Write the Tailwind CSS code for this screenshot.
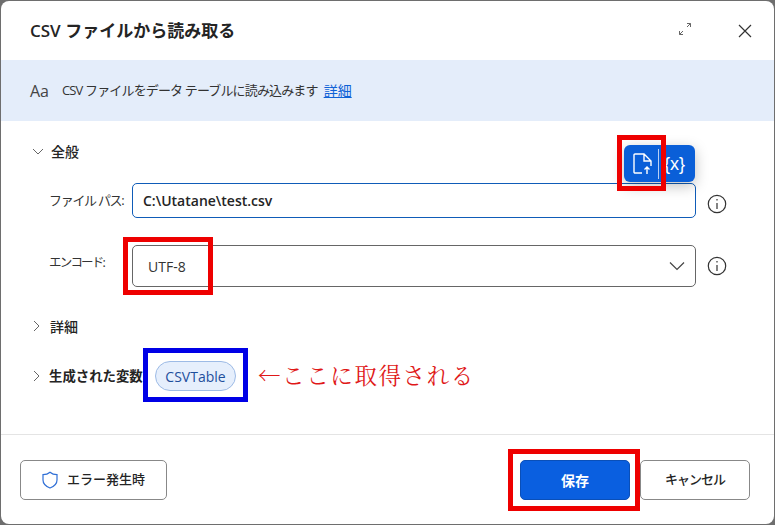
<!DOCTYPE html>
<html lang="ja">
<head>
  <meta charset="UTF-8" />
  <title>CSV ファイルから読み取る</title>
  <script src="https://cdn.jsdelivr.net/npm/@tailwindcss/browser@4"></script>
</head>
<body class="w-[775px] h-[525px] overflow-hidden bg-[#6e6e6e] text-[#242424] font-['Open_Sans','Noto_Sans_CJK_JP',sans-serif]">

  <!-- Dialog -->
  <div class="relative ml-[1px] mt-[1px] w-[773px] h-[523px] bg-white rounded-[8px] flex flex-col">

    <!-- Title -->
    <header class="h-[59px] flex items-center pl-[29px] pr-[21px]">
      <h1 class="text-[17px] font-semibold leading-none whitespace-nowrap">CSV ファイルから読み取る</h1>
      <svg class="ml-auto -mt-[3px]" width="14" height="14" viewBox="0 0 14 14" fill="none" stroke="#666" stroke-width="1">
        <path d="M1.5 12.5 L5 9 M1.5 9 V12.5 H5 M12.5 1.5 L9 5 M9 1.5 H12.5 V5" />
      </svg>
      <svg class="ml-[45px]" width="16" height="16" viewBox="0 0 16 16" fill="none" stroke="#333" stroke-width="1.2">
        <path d="M2 2 L14 14 M14 2 L2 14" />
      </svg>
    </header>

    <!-- Description -->
    <div class="h-[61px] bg-[#e4edfa] flex items-center pl-[29px] text-[13px]">
      <span class="w-[32px] text-[16px] text-[#444]">Aa</span>
      <span class="text-[#333] tracking-[-0.85px] whitespace-nowrap">CSV ファイルをデータ テーブルに読み込みます</span>
      <a href="#" class="ml-[6px] text-[14px] text-[#0f62d6] underline">詳細</a>
    </div>

    <!-- Form -->
    <div class="flex-1 pl-[31px] pr-[47px] pt-[19px]">
      <div class="h-[22px] flex items-center gap-[7px] text-[14px] font-medium">
        <svg width="12" height="12" viewBox="0 0 12 12" fill="none" stroke="#666"><path d="M1 4 L6 9 L11 4" /></svg>
        <span>全般</span>
      </div>

      <div class="mt-[21px] h-[35px] flex items-center">
        <label class="w-[100px] pl-[17px] text-[13px] tracking-[-1.3px] text-[#333] shrink-0 whitespace-nowrap">ファイル パス:</label>
        <div class="w-[564px] h-[35px] border border-[#0f5cb8] rounded-[5px] flex items-center pl-[10px] text-[14px] font-semibold">C:\Utatane\test.csv</div>
        <svg class="ml-[11px] mt-[6px]" width="20" height="20" viewBox="0 0 20 20" fill="none" stroke="#333" stroke-width="1.2">
          <circle cx="10" cy="10" r="8.7" /><path d="M10 9 V15 M10 5 V6.6" />
        </svg>
      </div>

      <div class="mt-[27px] h-[42px] flex items-center">
        <label class="w-[100px] pl-[17px] text-[12.5px] tracking-[-1.8px] text-[#333] shrink-0 -mt-[6px] whitespace-nowrap">エンコード:</label>
        <div class="w-[564px] h-[42px] border border-[#666] rounded-[5px] flex items-center pl-[15px] pr-[10px] text-[14px] text-[#333]">
          UTF-8
          <svg class="ml-auto" width="16" height="16" viewBox="0 0 16 16" fill="none" stroke="#444" stroke-width="1.2"><path d="M1 4.5 L8 11.5 L15 4.5" /></svg>
        </div>
        <svg class="ml-[11px]" width="20" height="20" viewBox="0 0 20 20" fill="none" stroke="#333" stroke-width="1.2">
          <circle cx="10" cy="10" r="8.7" /><path d="M10 9 V15 M10 5 V6.6" />
        </svg>
      </div>

      <div class="mt-[28px] h-[22px] flex items-center gap-[8px] text-[14px] font-medium">
        <svg width="10" height="12" viewBox="0 0 10 12" fill="none" stroke="#666"><path d="M2 1 L7 6 L2 11" /></svg>
        <span>詳細</span>
      </div>

      <div class="mt-[24px] h-[30px] flex items-center text-[13.4px] font-semibold">
        <svg class="mr-[7px]" width="10" height="12" viewBox="0 0 10 12" fill="none" stroke="#666"><path d="M2 1 L7 6 L2 11" /></svg>
        <span class="w-[106px] whitespace-nowrap">生成された変数</span>
        <span class="w-[81px] h-[30px] rounded-full border border-[#9dbbe6] bg-[#e6effc] text-[#1f4f9c] text-[14px] font-normal flex items-center justify-center">CSVTable</span>
        <span class="ml-[22px] -mt-[3px] text-[#e01818] text-[22.5px] font-normal font-['Noto_Serif_CJK_JP','Noto_Sans_CJK_JP',serif] tracking-[1.6px] whitespace-nowrap">←ここに取得される</span>
      </div>
    </div>

    <!-- Footer -->
    <footer class="h-[90px] border-t border-[#e4e4e4] flex items-center pl-[19px] pr-[24px] pt-[1px] text-[14px]">
      <button class="w-[147px] h-[40px] border border-[#888] rounded-[5px] flex items-center justify-center gap-[9px] text-[13px] font-medium">
        <svg width="16" height="18" viewBox="0 0 16 18" fill="none" stroke="#2f6fd6" stroke-width="1.2"><path d="M8 1.2 C10 3 12.5 3.6 15 3.6 V9 C15 13 12 15.5 8 17 C4 15.5 1 13 1 9 V3.6 C3.5 3.6 6 3 8 1.2 Z" /></svg>
        エラー発生時
      </button>
      <button class="ml-auto w-[110px] h-[40px] rounded-[5px] bg-[#0a5fe0] border border-[#0a4fb8] text-white font-bold">保存</button>
      <button class="ml-[10px] w-[110px] h-[40px] border border-[#888] rounded-[5px] text-[13px] tracking-[-1px] font-medium">キャンセル</button>
    </footer>

    <!-- File / variable popup over the input -->
    <div class="absolute left-[623px] top-[144px] w-[71px] h-[37px] rounded-[6px] bg-[#0a5fd8] shadow-[0_4px_14px_rgba(0,0,0,0.25)] flex items-center text-white">
      <svg class="ml-[8px]" width="21" height="22" viewBox="0 0 21 22" fill="none" stroke="white" stroke-width="1.4">
        <path d="M10 20 H3 A1 1 0 0 1 2 19 V2 A1 1 0 0 1 3 1 H12 L19 8 V13 M12 1 V8 H19 M15 21 V14 M12.5 16.5 L15 14 L17.5 16.5" />
      </svg>
      <span class="ml-[5px] w-[1px] h-[30px] bg-[#b8d0f5]"></span>
      <span class="ml-[5px] text-[18px] leading-none font-['Liberation_Sans',sans-serif]">{x}</span>
    </div>

    <!-- Annotation boxes drawn on the screenshot -->
    <div class="absolute left-[616px] top-[134px] w-[49px] h-[56px] border-[5px] border-[#ee0000]"></div>
    <div class="absolute left-[122px] top-[236px] w-[90px] h-[58px] border-[5px] border-[#ee0000]"></div>
    <div class="absolute left-[142px] top-[347px] w-[105px] h-[54px] border-[5px] border-[#0000e6]"></div>
    <div class="absolute left-[507px] top-[448px] w-[132px] h-[62px] border-[5px] border-[#ee0000]"></div>
  </div>
</body>
</html>
